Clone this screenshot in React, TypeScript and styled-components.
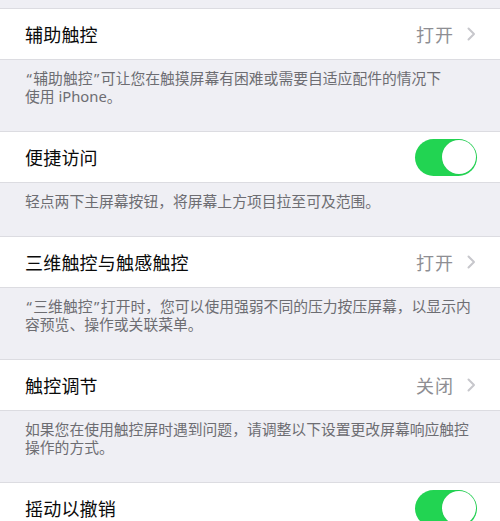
import React from "react";
import styled, { createGlobalStyle } from "styled-components";

const GlobalStyle = createGlobalStyle`
  body {
    margin: 0;
    background: #efeff4;
    font-family: "Noto Sans CJK SC", "Noto Sans", sans-serif;
    -webkit-font-smoothing: antialiased;
  }
`;

const Screen = styled.div`
  width: 500px;
  min-height: 521px;
  background: #efeff4;
  padding-top: 8px;
  overflow: hidden;
`;

const Cell = styled.div`
  height: 52px;
  box-sizing: border-box;
  background: #ffffff;
  border-top: 1px solid #dcdce1;
  border-bottom: 1px solid #dcdce1;
  display: flex;
  align-items: center;
  padding: 0 24px 0 25px;
`;

const Label = styled.span`
  flex: 1;
  font-size: 18px;
  color: #0a0a0a;
  letter-spacing: 0.2px;
`;

const Value = styled.span`
  display: flex;
  align-items: center;
  gap: 13px;
  font-size: 18px;
  color: #8e8e93;
  letter-spacing: 1px;
`;

// Latin family first so the curly quotes stay narrow, as on iOS
const Footer = styled.div`
  padding: 9px 20px 26px 25px;
  font-family: "Noto Sans", "Noto Sans CJK SC", sans-serif;
  font-size: 14.8px;
  line-height: 18px;
  color: #6d6d72;
`;

const Line = styled.span`
  display: block;
  white-space: nowrap;
`;

const Quote = styled.span`
  padding: 0 1.5px;
`;

const Switch = styled.div<{ $on: boolean }>`
  width: 62px;
  height: 37px;
  box-sizing: border-box;
  border-radius: 19px;
  background: ${(p) => (p.$on ? "#22d452" : "#e5e5ea")};
  padding: 1.5px;
  display: flex;
  justify-content: ${(p) => (p.$on ? "flex-end" : "flex-start")};
  margin-right: -1px;
`;

const Knob = styled.div`
  width: 34px;
  height: 34px;
  border-radius: 50%;
  background: #ffffff;
  box-shadow: 0 0 0 0.5px rgba(0, 0, 0, 0.05);
`;

const Chevron = () => (
  <svg width="9" height="14" viewBox="0 0 9 14">
    <path
      d="M1.5 1.5 L7 7 L1.5 12.5"
      fill="none"
      stroke="#c7c7cc"
      strokeWidth="2"
      strokeLinecap="round"
      strokeLinejoin="round"
    />
  </svg>
);

interface IRow {
  label: string;
  value?: string;
  toggle?: boolean;
  footer?: string[];
}

const rows: IRow[] = [
  {
    label: "辅助触控",
    value: "打开",
    footer: ["“辅助触控”可让您在触摸屏幕有困难或需要自适应配件的情况下", "使用 iPhone。"],
  },
  {
    label: "便捷访问",
    toggle: true,
    footer: ["轻点两下主屏幕按钮，将屏幕上方项目拉至可及范围。"],
  },
  {
    label: "三维触控与触感触控",
    value: "打开",
    footer: ["“三维触控”打开时，您可以使用强弱不同的压力按压屏幕，以显示内", "容预览、操作或关联菜单。"],
  },
  {
    label: "触控调节",
    value: "关闭",
    footer: ["如果您在使用触控屏时遇到问题，请调整以下设置更改屏幕响应触控", "操作的方式。"],
  },
  {
    label: "摇动以撤销",
    toggle: true,
  },
];

const renderLine = (text: string) =>
  text.split(/([“”])/).map((part, i) =>
    part === "“" || part === "”" ? <Quote key={i}>{part}</Quote> : part
  );

export default function App() {
  return (
    <>
      <GlobalStyle />
      <Screen>
        {rows.map((row) => (
          <div key={row.label}>
            <Cell>
              <Label>{row.label}</Label>
              {row.toggle ? (
                <Switch $on>
                  <Knob />
                </Switch>
              ) : (
                <Value>
                  {row.value}
                  <Chevron />
                </Value>
              )}
            </Cell>
            {row.footer && (
              <Footer>
                {row.footer.map((line) => (
                  <Line key={line}>{renderLine(line)}</Line>
                ))}
              </Footer>
            )}
          </div>
        ))}
      </Screen>
    </>
  );
}
